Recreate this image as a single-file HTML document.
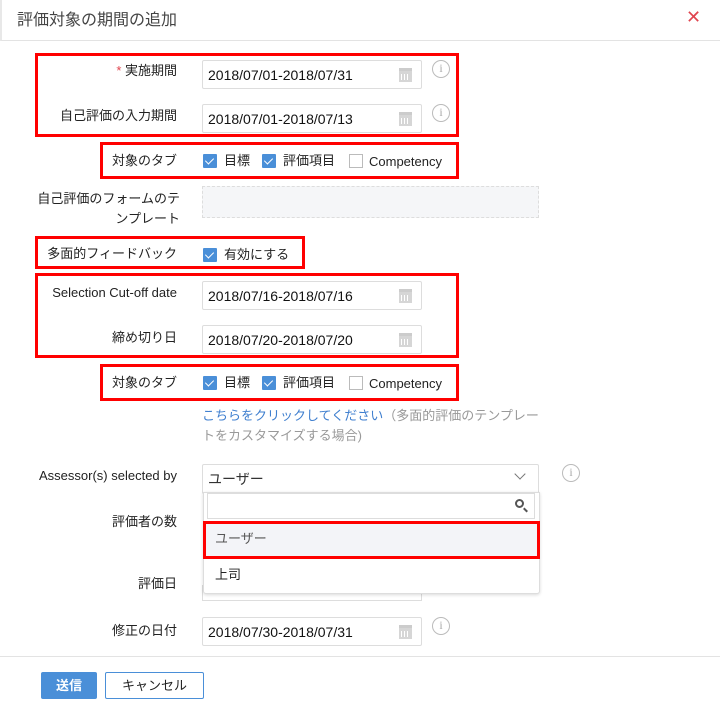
<!DOCTYPE html>
<html><head><meta charset="utf-8"><style>
*{box-sizing:border-box;margin:0;padding:0}
body{width:720px;height:712px;background:#fff;font-family:"Liberation Sans","Noto Sans CJK JP",sans-serif;font-size:13px;color:#222;position:relative;overflow:hidden;line-height:18px}
.a{position:absolute}
.hdr{left:0;top:0;width:720px;height:41px;border-bottom:1px solid #e3e3e3;border-left:2px solid #e8e8e8;background:#fff}
.title{left:17px;top:10px;font-size:16px;color:#444;line-height:22px}
.x{left:686px;top:8px;color:#e0454f;font-size:18px}
.red{border:3px solid #f00}
.lbl{text-align:right;width:170px;left:7px;font-size:13px;color:#222}
.inp{left:202px;width:220px;height:29px;border:1px solid #ddd;border-radius:2px;padding:5px 0 0 5px;font-size:14px;color:#111}
.cal{position:absolute;right:9px;top:7px;width:13px;height:14px;background:#d6d6d6;border-top:3px solid #ccc}
.cal:before{content:"";position:absolute;left:2px;top:3px;width:9px;height:6px;background:repeating-linear-gradient(90deg,#fff 0 1px,transparent 1px 3px)}
.info{width:18px;height:18px;border:1.5px solid #bbb;border-radius:50%;color:#aaa;font-size:12px;text-align:center;line-height:15px;font-family:"Liberation Serif",serif}
.cb{width:14px;height:14px;background:#4a8fd8;border-radius:1px}
.cb:after{content:"";position:absolute;left:4px;top:2px;width:4px;height:7px;border:solid #fff;border-width:0 1.5px 1.5px 0;transform:rotate(45deg)}
.cbe{width:14px;height:14px;border:1px solid #bbb;background:#fff}
.t{font-size:13px}
.c{font-size:13px;top:0}
</style></head><body>
<div class="a hdr"></div>
<div class="a title">評価対象の期間の追加</div>
<div class="a x">✕</div>

<div class="a red" style="left:35px;top:53px;width:424px;height:84px"></div>
<div class="a lbl" style="top:62px"><span style="color:#e0454f">*</span> 実施期間</div>
<div class="a inp" style="top:60px">2018/07/01-2018/07/31<span class="cal"></span></div>
<div class="a info" style="left:432px;top:60px">i</div>
<div class="a lbl" style="top:107px">自己評価の入力期間</div>
<div class="a inp" style="top:104px">2018/07/01-2018/07/13<span class="cal"></span></div>
<div class="a info" style="left:432px;top:104px">i</div>

<div class="a red" style="left:100px;top:142px;width:359px;height:37px"></div>
<div class="a lbl" style="top:152px">対象のタブ</div>
<div class="a cb" style="left:203px;top:154px"></div><div class="a t" style="left:224px;top:152px">目標</div>
<div class="a cb" style="left:262px;top:154px"></div><div class="a t" style="left:283px;top:152px">評価項目</div>
<div class="a cbe" style="left:349px;top:154px"></div><div class="a t" style="left:369px;top:153px">Competency</div>

<div class="a lbl" style="top:189px;line-height:20px;width:180px;left:0">自己評価のフォームのテ<br>ンプレート</div>
<div class="a" style="left:202px;top:186px;width:337px;height:32px;border:1px dashed #ddd;background:#f5f6f8"></div>

<div class="a red" style="left:35px;top:236px;width:270px;height:33px"></div>
<div class="a lbl" style="top:245px">多面的フィードバック</div>
<div class="a cb" style="left:203px;top:248px"></div><div class="a t" style="left:224px;top:246px">有効にする</div>

<div class="a red" style="left:35px;top:273px;width:424px;height:85px"></div>
<div class="a lbl" style="top:284px">Selection Cut-off date</div>
<div class="a inp" style="top:281px">2018/07/16-2018/07/16<span class="cal"></span></div>
<div class="a lbl" style="top:329px">締め切り日</div>
<div class="a inp" style="top:325px">2018/07/20-2018/07/20<span class="cal"></span></div>

<div class="a red" style="left:100px;top:364px;width:359px;height:37px"></div>
<div class="a lbl" style="top:374px">対象のタブ</div>
<div class="a cb" style="left:203px;top:376px"></div><div class="a t" style="left:224px;top:374px">目標</div>
<div class="a cb" style="left:262px;top:376px"></div><div class="a t" style="left:283px;top:374px">評価項目</div>
<div class="a cbe" style="left:349px;top:376px"></div><div class="a t" style="left:369px;top:375px">Competency</div>

<div class="a" style="left:202px;top:406px;font-size:13px;line-height:20px;color:#999;width:345px"><span style="color:#3f7fcf">こちらをクリックしてください</span>（多面的評価のテンプレートをカスタマイズする場合)</div>

<div class="a lbl" style="top:467px">Assessor(s) selected by</div>
<div class="a inp" style="top:464px;width:337px;height:30px;color:#333">ユーザー<span style="position:absolute;right:14px;top:5px;width:8px;height:8px;border:solid #777;border-width:0 1.5px 1.5px 0;transform:rotate(45deg)"></span></div>
<div class="a info" style="left:562px;top:464px">i</div>
<div class="a lbl" style="top:513px">評価者の数</div>
<div class="a lbl" style="top:575px">評価日</div>
<div class="a" style="left:202px;top:585px;width:220px;height:16px;border:1px solid #ddd"></div>

<div class="a" style="left:203px;top:492px;width:337px;height:102px;background:#fff;border:1px solid #ddd;border-radius:0 0 3px 3px;box-shadow:0 1px 3px rgba(0,0,0,.15)"></div>
<div class="a" style="left:207px;top:493px;width:328px;height:26px;border:1px solid #ddd"><span style="position:absolute;right:10px;top:5px;width:9px;height:9px;border:2px solid #555;border-radius:50%"></span><span style="position:absolute;right:6px;top:15px;width:5px;height:2px;background:#555;transform:rotate(45deg)"></span></div>
<div class="a" style="left:205px;top:523px;width:333px;height:34px;background:#f3f4f8"></div>
<div class="a red" style="left:203px;top:521px;width:337px;height:38px"></div>
<div class="a t" style="left:215px;top:530px;color:#555">ユーザー</div>
<div class="a t" style="left:215px;top:566px">上司</div>

<div class="a lbl" style="top:622px">修正の日付</div>
<div class="a inp" style="top:617px">2018/07/30-2018/07/31<span class="cal"></span></div>
<div class="a info" style="left:432px;top:617px">i</div>

<div class="a" style="left:0;top:656px;width:720px;height:1px;background:#e3e3e3"></div>
<div class="a" style="left:41px;top:672px;width:56px;height:27px;background:#4a8fd8;color:#fff;font-weight:bold;text-align:center;line-height:27px;border-radius:2px">送信</div>
<div class="a" style="left:105px;top:672px;width:99px;height:27px;border:1px solid #4a8fd8;color:#222;text-align:center;line-height:25px;border-radius:2px">キャンセル</div>
</body></html>
